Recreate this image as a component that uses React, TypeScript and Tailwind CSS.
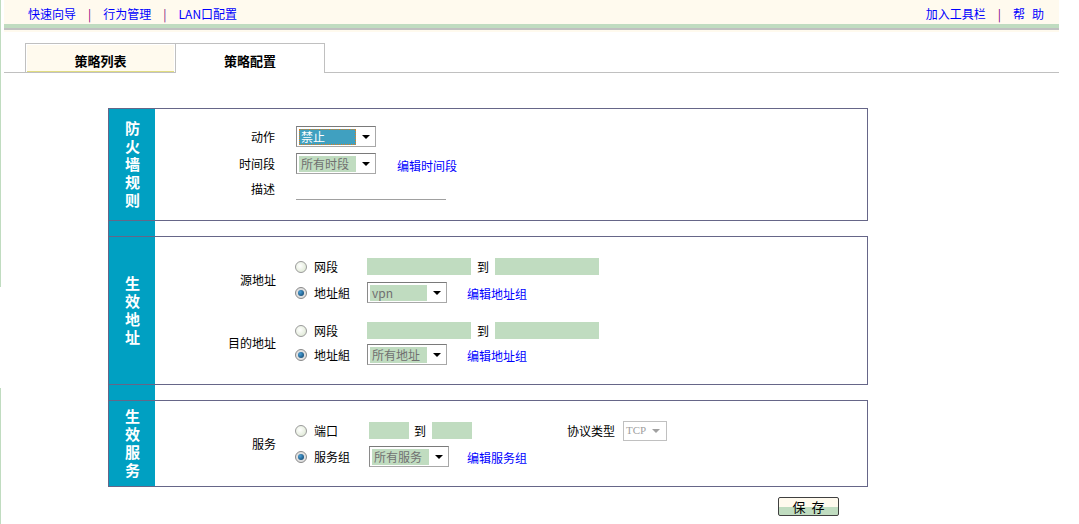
import React from "react";

const Arrow = ({ gray }: { gray?: boolean }) => (
  <span
    className={
      gray
        ? "w-0 h-0 border-x-[4px] border-x-transparent border-t-[4px] border-t-[#a0a0a0]"
        : "w-0 h-0 border-x-[4px] border-x-transparent border-t-[4px] border-t-black"
    }
  />
);

const Select = ({ text, active, w = "w-[80px]" }: { text: string; active?: boolean; w?: string }) => (
  <div
    className={`${w} h-[21px] flex items-center border border-[#a8a8a8] border-t-[#7a7a7a] border-l-[#8a8a8a] bg-white`}
  >
    {active ? (
      <div className="ml-[2px] w-[57px] h-[16px] bg-[#40a0c0] border border-dotted border-[#e08020] text-white text-[12px] leading-[14px] pl-[1px]">
        {text}
      </div>
    ) : (
      <div className="ml-[2px] w-[57px] h-[16px] bg-[#c0dcc0] text-[#707070] text-[12px] leading-[16px] pl-[2px]">
        {text}
      </div>
    )}
    <div className="flex-1 flex justify-center items-center">
      <Arrow />
    </div>
  </div>
);

const Radio = ({ checked }: { checked?: boolean }) =>
  checked ? (
    <span className="w-[12px] h-[12px] rounded-full border border-[#8a8a8a] bg-[#e0e0e0] flex items-center justify-center">
      <span className="w-[6px] h-[6px] rounded-full bg-[radial-gradient(circle_at_35%_35%,#4aa0d8,#0a3a60)]" />
    </span>
  ) : (
    <span className="w-[12px] h-[12px] rounded-full border border-[#9a9a9a] bg-[radial-gradient(circle_at_40%_40%,#ffffff,#d8e4cc)]" />
  );

const Green = ({ w }: { w: string }) => <div className={`${w} h-[17px] bg-[#c0dcc0]`} />;

const Link = ({ children }: { children: React.ReactNode }) => (
  <span className="text-[#0000ff] text-[12px]">{children}</span>
);

const SideLabel = ({ text }: { text: string }) => (
  <div className="w-[46px] bg-[#00a0c2] flex items-center justify-center text-white font-bold text-[15px]">
    <span className="[writing-mode:vertical-rl] tracking-[3px] leading-[18px] pt-[3px]">{text}</span>
  </div>
);

const Gap = () => (
  <div className="h-[15px] flex">
    <div className="w-[47px] border-l border-[#666688] bg-[#00a0c2]" />
  </div>
);

export default function App() {
  return (
    <div className="w-[1079px] h-[524px] bg-white flex font-['Noto_Sans_CJK_SC',sans-serif] text-[12px] text-black overflow-hidden">
      <div className="w-px flex flex-col">
        <div className="h-[287px] bg-[#c0dcc0]" />
        <div className="h-[101px]" />
        <div className="flex-1 bg-[#c0dcc0]" />
      </div>
      <div className="w-[3px]" />
      <div className="w-[1055px] flex flex-col">
        {/* top bar */}
        <div className="h-[24px] bg-[#fffaee] flex items-center justify-between pl-[24px] pr-[15px] pt-[4px]">
          <div className="flex items-center">
            <Link>快速向导</Link>
            <span className="mx-[12px] text-[#800080]">|</span>
            <Link>行为管理</Link>
            <span className="mx-[12px] text-[#800080]">|</span>
            <Link>LAN口配置</Link>
          </div>
          <div className="flex items-center">
            <Link>加入工具栏</Link>
            <span className="mx-[12px] text-[#800080]">|</span>
            <Link>帮</Link>
            <span className="ml-[7px]">
              <Link>助</Link>
            </span>
          </div>
        </div>
        <div className="h-[4px] bg-[#c0dcc0]" />
        <div className="h-[2px] bg-[#c0c0c0]" />
        <div className="h-[2px] bg-[#fffaee]" />

        {/* tabs */}
        <div className="mt-[11px] h-[30px] flex">
          <div className="w-[21px] border-b border-[#c0c0c0]" />
          <div className="w-[151px] border border-[#c0c0c0] flex flex-col pt-px px-px bg-white">
            <div className="flex-1 bg-[#fffaee] flex items-center justify-center pt-[6px] font-bold text-[13px]">
              策略列表
            </div>
            <div className="h-[4px] bg-[#e0dc80]" />
          </div>
          <div className="w-[149px] border-t border-r border-[#c0c0c0] flex items-center justify-center pt-[4px] font-bold text-[13px]">
            策略配置
          </div>
          <div className="flex-1 border-b border-[#c0c0c0]" />
        </div>

        {/* panel */}
        <div className="mt-[35px] ml-[104px] w-[760px] flex flex-col">
          {/* section 1 */}
          <div className="h-[113px] flex border border-[#666688]">
            <SideLabel text="防火墙规则" />
            <div className="flex-1 pt-[17px] flex flex-col gap-[6px]">
              <div className="h-[21px] flex items-center">
                <div className="w-[120px] text-right">动作</div>
                <div className="ml-[21px]">
                  <Select text="禁止" active />
                </div>
              </div>
              <div className="h-[21px] flex items-center">
                <div className="w-[120px] text-right">时间段</div>
                <div className="ml-[21px]">
                  <Select text="所有时段" />
                </div>
                <div className="ml-[21px] mt-[4px]">
                  <Link>编辑时间段</Link>
                </div>
              </div>
              <div className="h-[18px] flex items-center">
                <div className="w-[120px] text-right">描述</div>
                <div className="ml-[21px] w-[150px] h-[18px] border-b border-[#a0a0a0] mt-[4px]" />
              </div>
            </div>
          </div>
          <Gap />
          {/* section 2 */}
          <div className="h-[149px] flex border border-[#666688]">
            <SideLabel text="生效地址" />
            <div className="flex-1 pt-[19px] flex flex-col gap-[17px]">
              {[
                { label: "源地址", sel: "vpn", gap: "gap-[5px]" },
                { label: "目的地址", sel: "所有地址", gap: "gap-[3px]" },
              ].map((g, i) => (
                <div key={i} className="flex items-center">
                  <div className="w-[121px] text-right">{g.label}</div>
                  <div className={`ml-[19px] flex flex-col ${g.gap}`}>
                    <div className="h-[21px] flex items-center">
                      <div className="w-[72px] flex items-center">
                        <Radio />
                        <span className="ml-[7px]">网段</span>
                      </div>
                      <Green w="w-[104px]" />
                      <span className="ml-[6px]">到</span>
                      <div className="ml-[6px]">
                        <Green w="w-[104px]" />
                      </div>
                    </div>
                    <div className="h-[21px] flex items-center">
                      <div className="w-[72px] flex items-center">
                        <Radio checked />
                        <span className="ml-[7px]">地址組</span>
                      </div>
                      <Select text={g.sel} />
                      <div className="ml-[20px] mt-[3px]">
                        <Link>编辑地址组</Link>
                      </div>
                    </div>
                  </div>
                </div>
              ))}
            </div>
          </div>
          <Gap />
          {/* section 3 */}
          <div className="h-[87px] flex border border-[#666688]">
            <SideLabel text="生效服务" />
            <div className="flex-1 pt-[19px]">
              <div className="flex items-center">
                <div className="w-[121px] text-right">服务</div>
                <div className="ml-[19px] flex flex-col gap-[5px]">
                  <div className="h-[21px] flex items-center">
                    <div className="w-[74px] flex items-center">
                      <Radio />
                      <span className="ml-[7px]">端口</span>
                    </div>
                    <Green w="w-[40px]" />
                    <span className="ml-[5px]">到</span>
                    <div className="ml-[6px]">
                      <Green w="w-[40px]" />
                    </div>
                    <span className="ml-[95px]">协议类型</span>
                    <div className="ml-[8px] w-[44px] h-[20px] border border-[#c0c0c0] flex items-center pl-[2px] text-[#a0a0a0] text-[11px] font-['Liberation_Serif',serif]">
                      <span>TCP</span>
                      <div className="flex-1 flex justify-center">
                        <Arrow gray />
                      </div>
                    </div>
                  </div>
                  <div className="h-[21px] flex items-center">
                    <div className="w-[74px] flex items-center">
                      <Radio checked />
                      <span className="ml-[7px]">服务组</span>
                    </div>
                    <Select text="所有服务" />
                    <div className="ml-[18px] mt-[3px]">
                      <Link>编辑服务组</Link>
                    </div>
                  </div>
                </div>
              </div>
            </div>
          </div>
          {/* save */}
          <div className="mt-[10px] flex justify-end pr-[29px]">
            <div className="w-[61px] h-[19px] rounded-[2px] border border-[#404040] bg-[linear-gradient(#fffaee_50%,#c0dcc0_50%)] flex items-center justify-center text-[13px] leading-none">
              保&nbsp;&nbsp;存
            </div>
          </div>
        </div>
      </div>
    </div>
  );
}
